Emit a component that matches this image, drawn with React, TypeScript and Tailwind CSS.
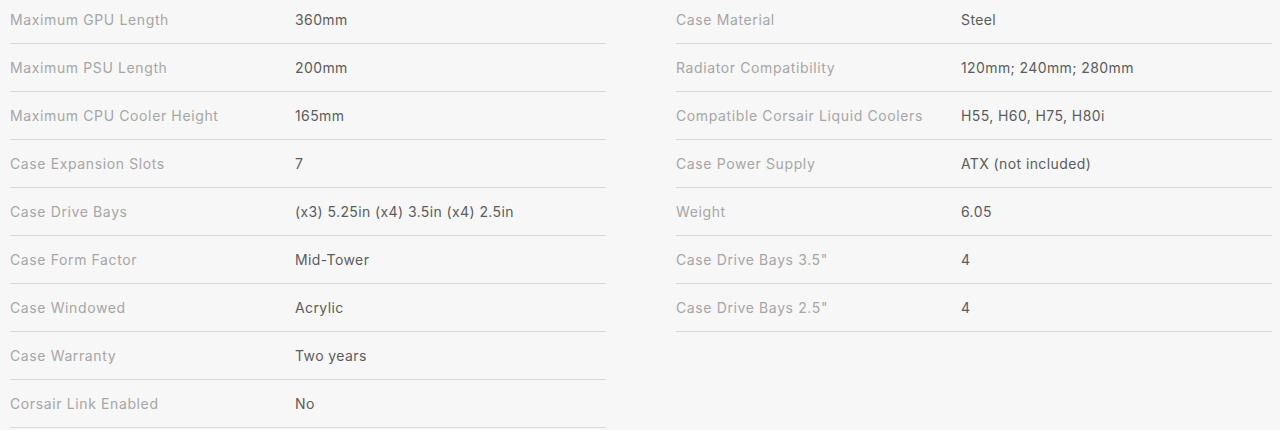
import React from 'react';

type Spec = { label: string; value: string };

const left: Spec[] = [
  { label: 'Maximum GPU Length', value: '360mm' },
  { label: 'Maximum PSU Length', value: '200mm' },
  { label: 'Maximum CPU Cooler Height', value: '165mm' },
  { label: 'Case Expansion Slots', value: '7' },
  { label: 'Case Drive Bays', value: '(x3) 5.25in (x4) 3.5in (x4) 2.5in' },
  { label: 'Case Form Factor', value: 'Mid-Tower' },
  { label: 'Case Windowed', value: 'Acrylic' },
  { label: 'Case Warranty', value: 'Two years' },
  { label: 'Corsair Link Enabled', value: 'No' },
];

const right: Spec[] = [
  { label: 'Case Material', value: 'Steel' },
  { label: 'Radiator Compatibility', value: '120mm; 240mm; 280mm' },
  { label: 'Compatible Corsair Liquid Coolers', value: 'H55, H60, H75, H80i' },
  { label: 'Case Power Supply', value: 'ATX (not included)' },
  { label: 'Weight', value: '6.05' },
  { label: 'Case Drive Bays 3.5"', value: '4' },
  { label: 'Case Drive Bays 2.5"', value: '4' },
];

function SpecList({ items }: { items: Spec[] }) {
  return (
    <div className="w-[596px]">
      {items.map((item) => (
        <div
          key={item.label}
          className="flex h-[48px] items-center border-b border-[#d9d9d9]"
        >
          <div className="w-[285px] shrink-0 tracking-[0.62px] text-[#a6a6a6]">
            {item.label}
          </div>
          <div className="tracking-[0.4px] text-[#5c5c5c]">{item.value}</div>
        </div>
      ))}
    </div>
  );
}

export default function App() {
  return (
    <div
      className="h-[430px] overflow-hidden bg-[#f7f7f7] text-[14px]"
      style={{ fontFamily: 'Inter, "Liberation Sans", sans-serif' }}
    >
      <div className="-mt-[4px] flex gap-[70px] pl-[10px]">
        <SpecList items={left} />
        <SpecList items={right} />
      </div>
    </div>
  );
}
